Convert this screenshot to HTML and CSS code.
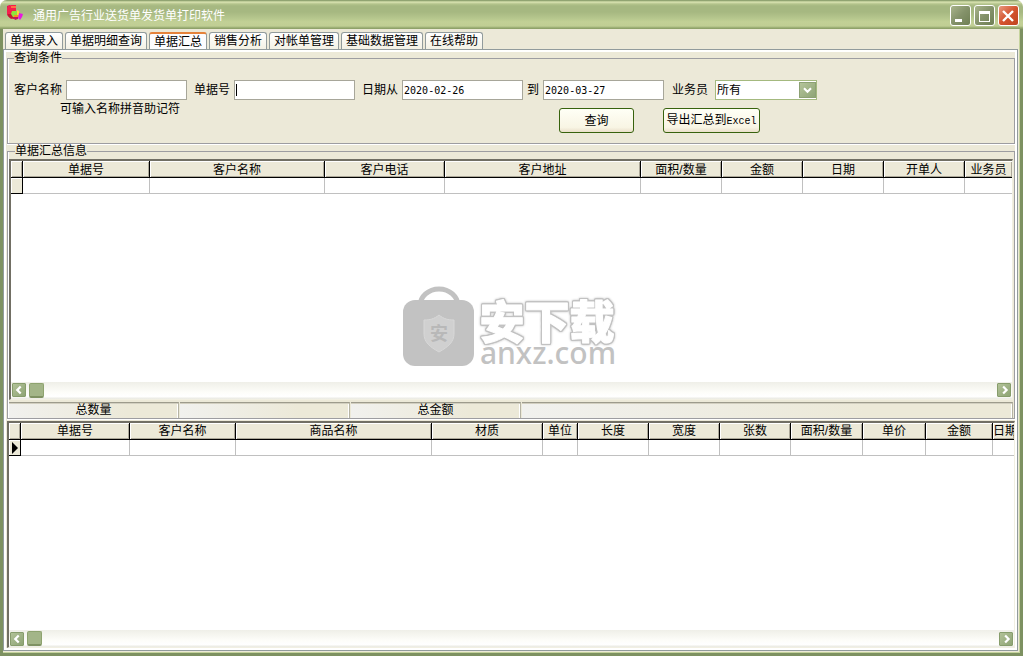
FILE: index.html
```html
<!DOCTYPE html>
<html lang="zh-CN">
<head>
<meta charset="utf-8">
<title>通用广告行业送货单发货单打印软件</title>
<link rel="stylesheet" href="styles.css">
</head>
<body>
<div class="window">
  <header class="titlebar">
    <svg class="app-icon" viewBox="0 0 17 17" aria-hidden="true">
      <path d="M0 1l3-1v9l3 4-2 1-4-4z" fill="#d3145c"/>
      <path d="M1 1l3-1h5v6H6v5H2L0 9V3z" fill="#f5204c"/>
      <path d="M4 1h5v2H4z" fill="#ff7043"/>
      <path d="M1 9h4l4 2-2 3-4-1-2-2z" fill="#c01c30"/>
      <path d="M5 6h5l3 2v4H6L4 9z" fill="#8ee63c"/>
      <path d="M10 5l2 1v4h-2z" fill="#ffd23a"/>
      <path d="M7 10h4v2H7z" fill="#ff8a20"/>
      <path d="M12 8l4 1-1 3-2 3-2-2z" fill="#e817e0"/>
      <path d="M6 12h5v2l-3 1z" fill="#be1463"/>
    </svg>
    <h1 class="title">通用广告行业送货单发货单打印软件</h1>
    <div class="window-buttons">
      <button class="winbtn" type="button" aria-label="最小化"><svg viewBox="0 0 18 18"><path d="M4 12h7v3H4z" fill="#fff"/></svg></button>
      <button class="winbtn" type="button" aria-label="最大化"><svg viewBox="0 0 18 18"><path d="M4 4h11v11H4zM5 7v7h9V7z" fill="#fff" fill-rule="evenodd"/></svg></button>
      <button class="winbtn close" type="button" aria-label="关闭"><svg viewBox="0 0 18 18"><path d="M4 4l10 10M14 4L4 14" stroke="#fff" stroke-width="2.4"/></svg></button>
    </div>
  </header>

  <main class="client">
    <nav class="tabs">
      <button class="tab" type="button">单据录入</button>
      <button class="tab" type="button">单据明细查询</button>
      <button class="tab active" type="button">单据汇总</button>
      <button class="tab" type="button">销售分析</button>
      <button class="tab" type="button">对帐单管理</button>
      <button class="tab" type="button">基础数据管理</button>
      <button class="tab" type="button">在线帮助</button>
    </nav>

    <div class="page">
      <fieldset class="group query">
        <legend>查询条件</legend>
        <div class="fields">
          <div class="field"><label for="customer">客户名称</label><input class="text" id="customer" type="text"></div>
          <div class="field"><label for="number">单据号</label><input class="text caret" id="number" type="text"></div>
          <div class="field"><label for="from">日期从</label><input class="text" id="from" type="text" value="2020-02-26"></div>
          <div class="field"><label for="to">到</label><input class="text" id="to" type="text" value="2020-03-27"></div>
          <div class="field staff"><label for="staff">业务员</label>
            <span class="combo">
              <select id="staff"><option>所有</option></select>
              <svg class="combo-arrow" viewBox="0 0 16 16" aria-hidden="true"><path d="M4 6l4 4 4-4" fill="none" stroke="#fff" stroke-width="2.4"/></svg>
            </span>
          </div>
        </div>
        <div class="actions">
          <span class="hint">可输入名称拼音助记符</span>
          <button class="btn search" type="button">查询</button>
          <button class="btn export" type="button">导出汇总到<span class="latin">Excel</span></button>
        </div>
      </fieldset>

      <fieldset class="group summary">
        <legend>单据汇总信息</legend>
        <div class="grid">
          <table>
            <colgroup><col class="w12"><col class="w127"><col class="w175"><col class="w120"><col class="w196"><col class="w81"><col class="w81"><col class="w81"><col class="w81"><col></colgroup>
            <thead><tr><th></th><th>单据号</th><th>客户名称</th><th>客户电话</th><th>客户地址</th><th>面积/数量</th><th>金额</th><th>日期</th><th>开单人</th><th>业务员</th></tr></thead>
            <tbody><tr><td class="marker"></td><td></td><td></td><td></td><td></td><td></td><td></td><td></td><td></td><td></td></tr></tbody>
          </table>
          <div class="scrollbar">
            <button class="arrow" type="button" aria-label="向左"><svg viewBox="0 0 14 14"><path d="M9 3L5 7l4 4" fill="none" stroke="#fff" stroke-width="2.6"/></svg></button>
            <span class="thumb"></span>
            <button class="arrow right" type="button" aria-label="向右"><svg viewBox="0 0 14 14"><path d="M6 3l4 4-4 4" fill="none" stroke="#fff" stroke-width="2.6"/></svg></button>
          </div>
        </div>
        <div class="status">
          <span class="cell">总数量</span><span class="cell"></span><span class="cell">总金额</span><span class="cell fill"></span>
        </div>
      </fieldset>

      <div class="grid detail">
        <table>
          <colgroup><col class="w12"><col class="w109"><col class="w106"><col class="w196"><col class="w111"><col class="w35"><col class="w71"><col class="w71"><col class="w71"><col class="w72"><col class="w63"><col class="w67"><col></colgroup>
          <thead><tr><th></th><th>单据号</th><th>客户名称</th><th>商品名称</th><th>材质</th><th>单位</th><th>长度</th><th>宽度</th><th>张数</th><th>面积/数量</th><th>单价</th><th>金额</th><th>日期</th></tr></thead>
          <tbody><tr><td class="marker"><svg viewBox="0 0 11 15"><path d="M3 2v12l6-6z" fill="#000"/></svg></td><td></td><td></td><td></td><td></td><td></td><td></td><td></td><td></td><td></td><td></td><td></td><td></td></tr></tbody>
        </table>
        <div class="scrollbar">
          <button class="arrow" type="button" aria-label="向左"><svg viewBox="0 0 14 14"><path d="M9 3L5 7l4 4" fill="none" stroke="#fff" stroke-width="2.6"/></svg></button>
          <span class="thumb"></span>
          <button class="arrow right" type="button" aria-label="向右"><svg viewBox="0 0 14 14"><path d="M6 3l4 4-4 4" fill="none" stroke="#fff" stroke-width="2.6"/></svg></button>
        </div>
      </div>
    </div>
  </main>

  <div class="watermark">
    <svg viewBox="0 0 216 82">
      <path d="M17 20a19 17 0 0 1 38 0" fill="none" stroke="#c2c2c2" stroke-width="5"/>
      <rect x="0" y="14" width="71" height="66" rx="12" fill="#c2c2c2"/>
      <path d="M36 29c5 4 9 5 15 5v14c0 8-6 13-15 18-9-5-15-10-15-18V34c6 0 10-1 15-5z" fill="#d0d0d0" stroke="#d8d8d8"/>
      <text class="wm-badge" x="36" y="54" text-anchor="middle">安</text>
      <text class="wm-name" x="144" y="53" text-anchor="middle">安下载</text>
      <text class="wm-site" x="145" y="78" text-anchor="middle">anxz.com</text>
    </svg>
  </div>
</div>
</body>
</html>
```
FILE: styles.css
```css
* { box-sizing: border-box; }

body {
  margin: 0;
  background: #fff;
  color: #000;
  font: 12px/12px "Liberation Sans", "Noto Sans CJK SC", sans-serif;
}

button, input, select {
  margin: 0;
  padding: 0;
  color: inherit;
  font: inherit;
}

svg { display: block; }

.window {
  position: relative;
  display: flex;
  flex-direction: column;
  min-height: 100vh;
  background: #ece9d8;
  border-radius: 7px 7px 0 0;
  overflow: hidden;
}

/* Title bar */
.titlebar {
  display: flex;
  align-items: center;
  height: 29px;
  padding: 2px 4px 0 7px;
  background: linear-gradient(#7f9365 0, #a3b57f 1px, #dce5b4 2px, #b4c48c 4px, #a6b881 6px, #a6b881 12px, #b5c68d 18px, #c2d096 22px, #c0ce94 26px, #93a66d 28px, #8a9c66 29px);
}

.app-icon { width: 17px; height: 17px; margin-top: -5px; }

.title {
  flex: 1;
  margin: 0 0 0 9px;
  color: #fff;
  font-size: 12px;
  font-weight: 400;
}

.window-buttons { display: flex; gap: 3px; }

.winbtn {
  width: 21px;
  height: 21px;
  border: 1px solid #fff;
  border-radius: 3px;
  background: linear-gradient(135deg, #a9b48b, #84926a 50%, #6f7f54);
}

.winbtn.close { background: linear-gradient(135deg, #e89a80, #d4532e 50%, #c04420); }

.winbtn svg { width: 18px; height: 18px; }

/* Client area */
.client {
  flex: 1;
  display: flex;
  flex-direction: column;
  padding: 3px 2px 2px 0;
  border: solid #7d9161;
  border-width: 0 3px 3px;
  box-shadow: inset -1px -1px #c5d39d;
}

.tabs {
  display: flex;
  gap: 2px;
  height: 17px;
  padding-left: 2px;
}

.tab {
  padding: 0 4px;
  border: 1px solid #919b9c;
  border-bottom: 0;
  border-radius: 3px 3px 0 0;
  background: linear-gradient(#fff, #f3f1e4);
}

.tab.active {
  border-top: 2px solid #e5823a;
  background: #fcfcfe;
}

.page {
  flex: 1;
  display: flex;
  flex-direction: column;
  padding: 2px 2px 2px 3px;
  border: 1px solid #919b9c;
  box-shadow: inset 0 0 0 2px #fff;
}

.group {
  min-width: 0;
  margin: 0;
  padding: 0;
  border: 1px solid #9d9da1;
  box-shadow: 0 1px #fff, inset 1px 0 #fff;
}

.group legend {
  margin-left: 6px;
  padding: 0;
  background: #ece9d8;
}

.query { padding: 16px 0 10px 6px; margin-bottom: 1px; }
.query legend { margin-left: 0; }

.fields { display: flex; align-items: center; }

.field { display: flex; align-items: center; gap: 4px; margin-right: 7px; }

.field.staff { gap: 7px; margin-left: 1px; }

.text {
  width: 121px;
  height: 20px;
  padding: 0 1px;
  border: 1px solid #a7a69a;
  border-radius: 0;
  outline: 0;
  background: #fff;
  font: 10px/18px "DejaVu Sans Mono", "Noto Sans CJK SC", monospace;
}

.text.caret { background: linear-gradient(#000, #000) 1px 3px / 1px 12px no-repeat #fff; }

#from { margin-right: -3px; }

.combo { position: relative; display: block; }

.combo select {
  width: 102px;
  height: 20px;
  padding-left: 1px;
  border: 1px solid #a4b97f;
  border-radius: 0;
  appearance: none;
  background: #fff;
}

.combo-arrow {
  position: absolute;
  top: 2px;
  right: 1px;
  width: 17px;
  height: 16px;
  border: 1px solid #8da174;
  background: linear-gradient(135deg, #b4c49a, #8fa576);
  pointer-events: none;
}

.actions { display: flex; align-items: flex-end; }

.hint { align-self: flex-start; margin: 3px 0 0 46px; }

.btn {
  height: 25px;
  margin-top: 8px;
  border: 1px solid #37620d;
  border-radius: 3px;
  background: linear-gradient(#fffff6, #f8f5e4 80%, #eadfca);
}

.search { width: 75px; margin-left: 379px; }
.export { width: 97px; margin-left: 29px; }
.latin { font: 10px/12px "Liberation Mono", monospace; }

/* Summary group */
.summary { flex: 274 1 0; display: flex; flex-direction: column; padding: 2px 1px 0; }

.grid {
  flex: 1;
  display: flex;
  flex-direction: column;
  border: solid;
  border-width: 2px 1px 1px 2px;
  border-color: #716f64 #f1efe2 #f1efe2 #716f64;
  background: #fff;
  overflow: hidden;
}

.detail { flex: 228 1 0; margin: 2px 0 0; }

table {
  width: 100%;
  border-collapse: separate;
  border-spacing: 0;
  table-layout: fixed;
}

th, td { padding: 0; overflow: hidden; }

th {
  height: 17px;
  padding-top: 1px;
  border: solid #000;
  border-width: 0 1px 1px 0;
  background: #ece9d8;
  box-shadow: inset 1px 1px #fff, inset -1px -1px #aca899;
  font-weight: 400;
  white-space: nowrap;
}

td {
  height: 16px;
  border: solid #c0c0c0;
  border-width: 0 1px 1px 0;
}

th:last-child, td:last-child { border-right: 0; }

td.marker {
  border-color: #000;
  background: #ece9d8;
  box-shadow: inset 1px 1px #fff;
}

.marker svg { width: 11px; height: 15px; }

.w12 { width: 12px; }
.w35 { width: 35px; }
.w63 { width: 63px; }
.w67 { width: 67px; }
.w71 { width: 71px; }
.w72 { width: 72px; }
.w81 { width: 81px; }
.w106 { width: 106px; }
.w109 { width: 109px; }
.w111 { width: 111px; }
.w120 { width: 120px; }
.w127 { width: 127px; }
.w175 { width: 175px; }
.w196 { width: 196px; }

.scrollbar {
  display: flex;
  align-items: center;
  gap: 3px;
  height: 17px;
  margin-top: auto;
  padding: 0 1px;
  background: linear-gradient(#efefe8, #fdfdf9 60%, #fff 85%, #e8e8e0);
}

.arrow {
  width: 14px;
  height: 14px;
  border: 1px solid #879d6c;
  border-radius: 1px;
  background: linear-gradient(135deg, #b2c298, #8ea475);
}

.arrow svg { width: 12px; height: 12px; }
.arrow.right { margin-left: auto; }

.thumb {
  width: 15px;
  height: 15px;
  border: 1px solid #8ea36f;
  border-bottom: 2px solid #7f9263;
  border-radius: 2px;
  background: #a3b588;
}

.status {
  display: flex;
  gap: 1px;
  height: 16px;
  margin-top: 2px;
}

.cell {
  width: 170px;
  border-top: 1px solid #9d9b8c;
  border-right: 1px solid #b5b3a4;
  background: linear-gradient(90deg, #f1f1ee, #ece9d8 70%);
  box-shadow: inset 0 1px #d2cfc0, inset -1px 0 #fff;
  line-height: 15px;
  text-align: center;
}

.cell.fill { flex: 1; }

/* Floating brand mark over the upper grid */
.watermark {
  position: absolute;
  top: 286px;
  left: 403px;
  width: 216px;
  pointer-events: none;
}

.wm-badge { fill: #b8b8b8; font: 700 18px "Noto Sans CJK SC", sans-serif; }

.wm-name {
  fill: #fff;
  stroke: #fff;
  stroke-width: 1px;
  stroke-linejoin: round;
  font: 900 45px "Noto Sans CJK SC", sans-serif;
  filter: drop-shadow(1px 0 #c2c2c2) drop-shadow(-1px 0 #c2c2c2) drop-shadow(0 1px #c2c2c2) drop-shadow(0 -1px #c2c2c2) drop-shadow(0 0 1px #c2c2c2);
}

.wm-site { fill: #c2c2c2; font: 500 30px "Noto Sans", sans-serif; }
```
